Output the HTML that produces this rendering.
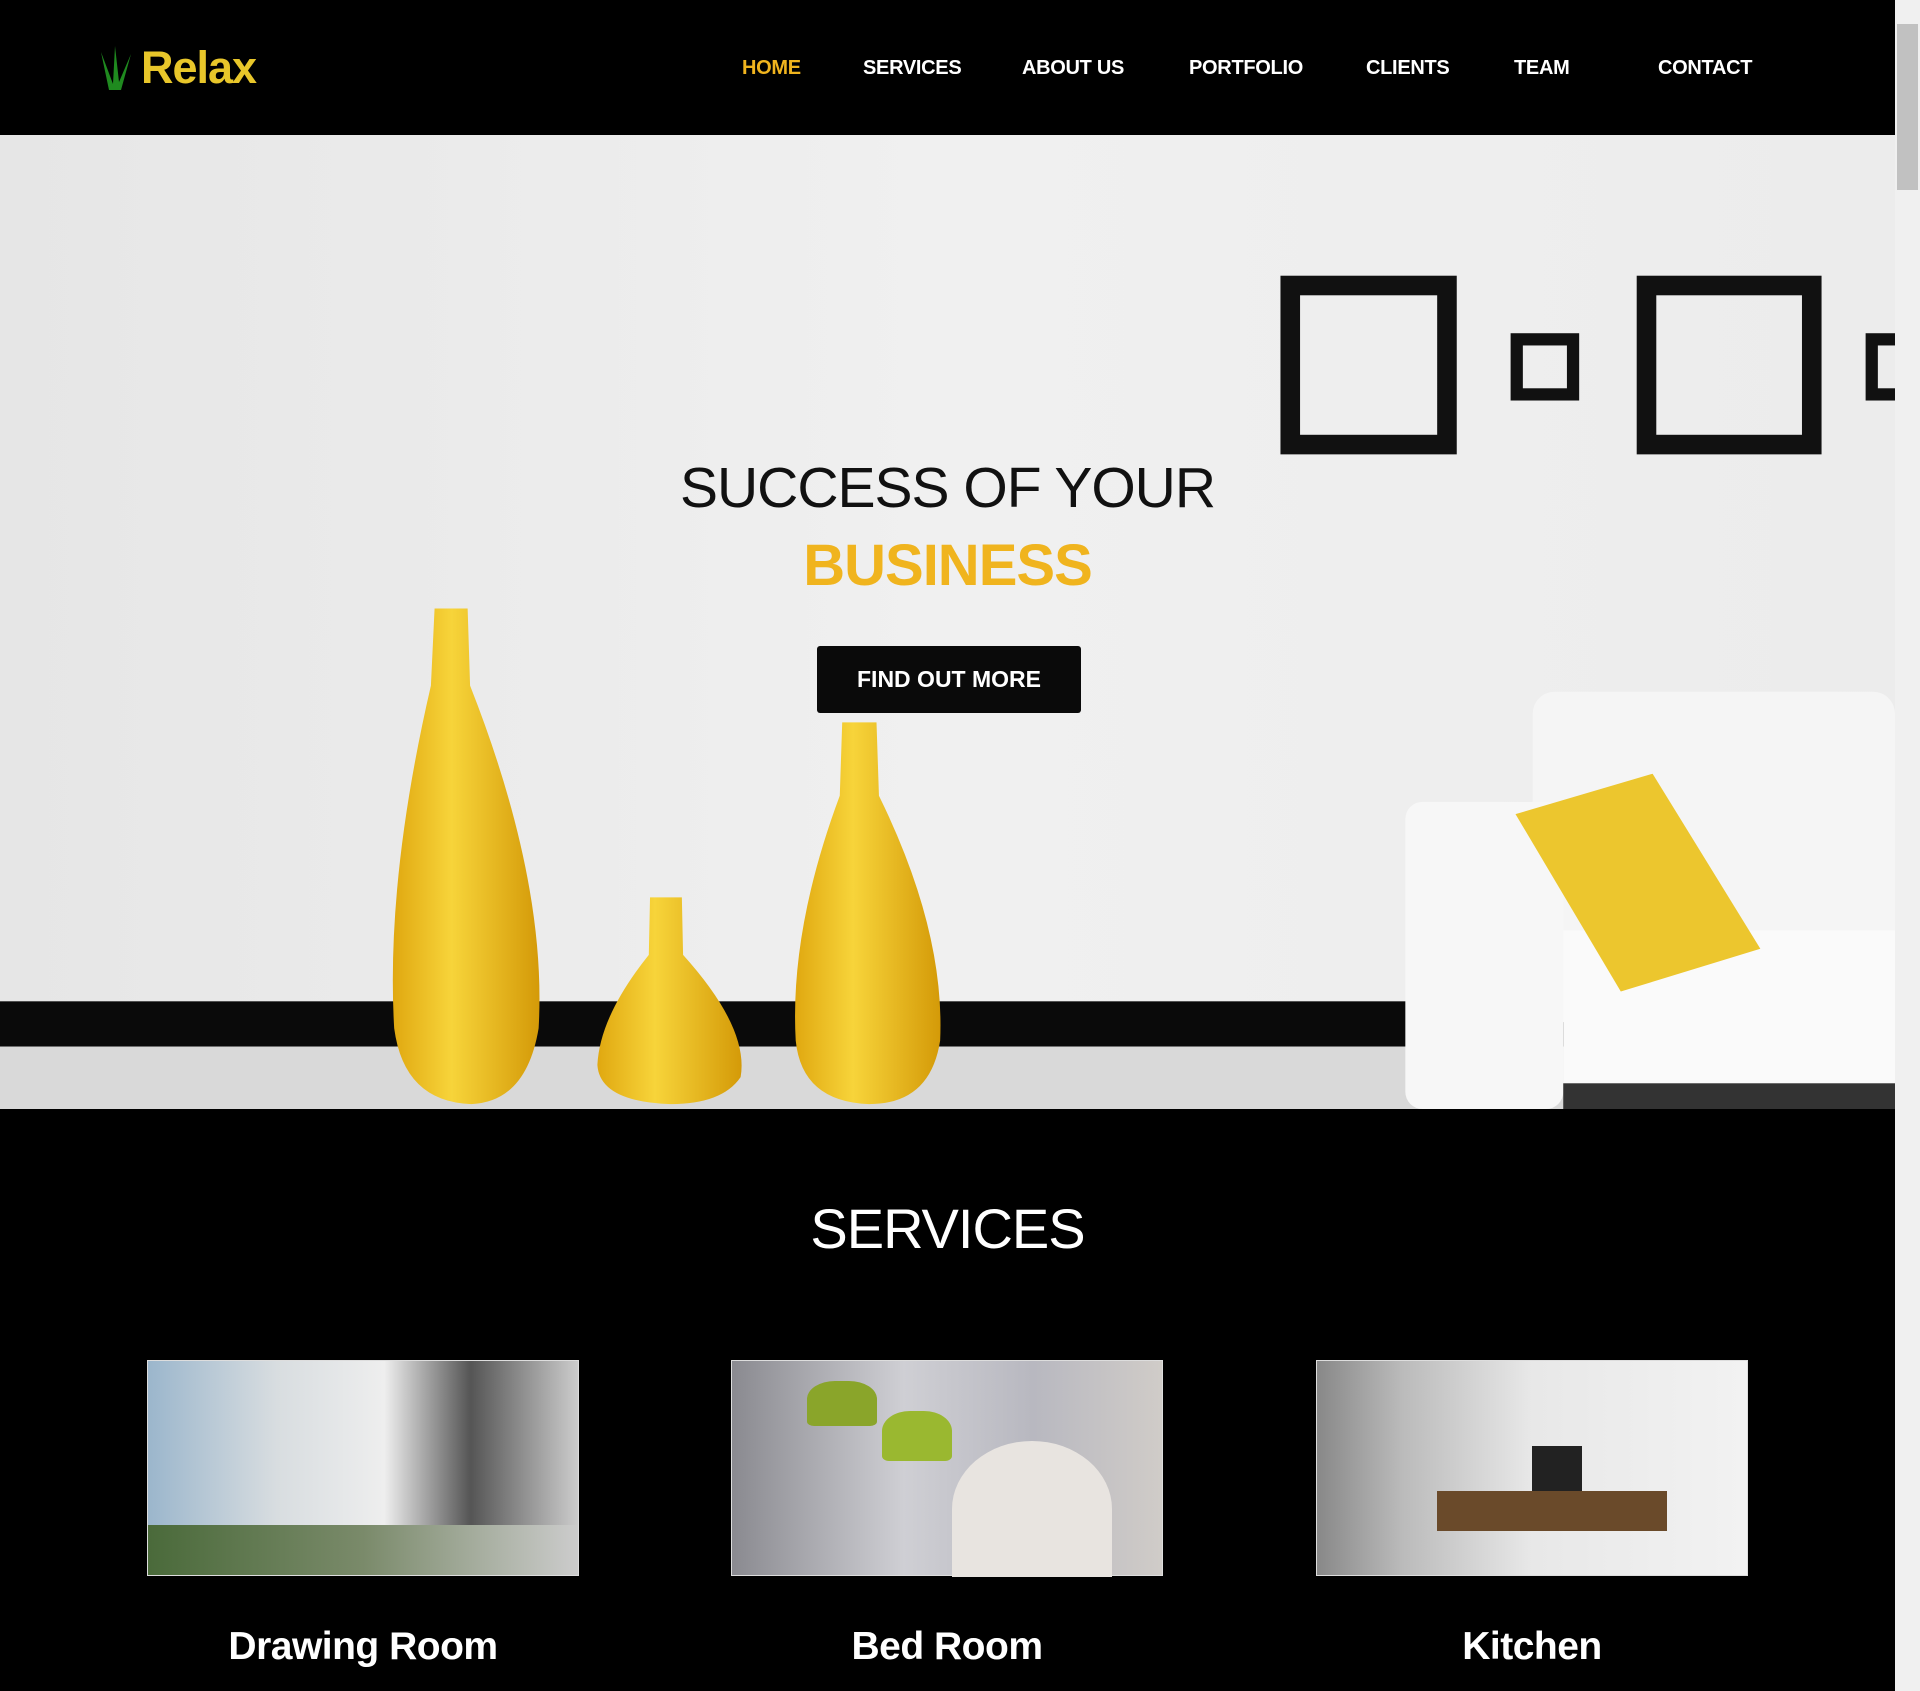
<!DOCTYPE html>
<html><head><meta charset="utf-8"><style>
*{margin:0;padding:0;box-sizing:border-box}
body{width:1920px;height:1691px;background:#000;overflow:hidden;font-family:"Liberation Sans",sans-serif;position:relative}
.nav{position:absolute;left:0;top:0;width:1895px;height:135px;background:#000}
.logo{position:absolute;left:141px;top:42px;color:#e8c62a;font-size:45px;font-weight:bold;letter-spacing:-1px}
.nav a{position:absolute;top:57px;color:#fff;font-size:20px;font-weight:bold;text-decoration:none;letter-spacing:-0.3px}
.hero{position:absolute;left:0;top:135px;width:1895px;height:974px}
.h1{position:absolute;left:0;width:1895px;text-align:center;top:320px;font-size:57px;color:#111;font-weight:normal;letter-spacing:-1px}
.h2{position:absolute;left:0;width:1895px;text-align:center;top:397px;font-size:58px;color:#f0b41e;font-weight:bold;letter-spacing:-1px}
.btn{position:absolute;left:817px;top:511px;width:264px;height:67px;background:#0a0a0a;border-radius:3px;color:#fff;font-size:23px;font-weight:bold;text-align:center;line-height:67px}
.sb{position:absolute;left:1895px;top:0;width:25px;height:1691px;background:#f0f0f0}
.thumb{position:absolute;left:1897px;top:24px;width:21px;height:166px;background:#c1c1c1}
.st{position:absolute;top:1196px;width:1895px;text-align:center;color:#fff;font-size:56px;letter-spacing:-1px}
.img{position:absolute;top:1360px;width:432px;height:216px;border:1px solid #ddd}
.cap{position:absolute;top:1625px;width:432px;text-align:center;color:#fff;font-size:39px;font-weight:bold;letter-spacing:-0.5px}
</style></head><body>
<div class="nav">
<svg style="position:absolute;left:95px;top:44px" width="40" height="46" viewBox="0 0 40 46"><path d="M14 46 L6 8 L18 40 L20 2 L24 38 L36 10 L26 46Z" fill="#1f8a1f"/></svg>
<div class="logo">Relax</div>
<a style="left:742px;color:#f0b41e">HOME</a>
<a style="left:863px">SERVICES</a>
<a style="left:1022px">ABOUT US</a>
<a style="left:1189px">PORTFOLIO</a>
<a style="left:1366px">CLIENTS</a>
<a style="left:1514px">TEAM</a>
<a style="left:1658px">CONTACT</a>
</div>
<div class="hero">
<svg width="1895" height="974" viewBox="0 110 1548 796" preserveAspectRatio="none">
<defs><linearGradient id="bg" x1="0" y1="0" x2="1" y2="0"><stop offset="0" stop-color="#e6e6e6"/><stop offset=".5" stop-color="#f0f0f0"/><stop offset="1" stop-color="#ececec"/></linearGradient>
<linearGradient id="y" x1="0" y1="0" x2="1" y2="0"><stop offset="0" stop-color="#e0a810"/><stop offset=".4" stop-color="#f7d43a"/><stop offset="1" stop-color="#d49a08"/></linearGradient></defs>
<rect x="0" y="110" width="1548" height="796" fill="url(#bg)"/>
<rect x="0" y="818" width="1548" height="37" fill="#0a0a0a"/>
<rect x="0" y="855" width="1548" height="51" fill="#d9d9d9"/>
<g fill="none" stroke="#111"><rect x="1054" y="233" width="128" height="130" stroke-width="16"/><rect x="1239" y="277" width="46" height="45" stroke-width="10"/><rect x="1345" y="233" width="135" height="130" stroke-width="16"/><rect x="1529" y="277" width="30" height="45" stroke-width="10"/></g>
<path d="M355 497 L382 497 L384 560 Q447 720 440 840 Q430 900 385 902 Q330 900 322 840 Q315 720 352 560Z" fill="url(#y)"/>
<path d="M531 733 L557 733 L558 780 Q612 840 605 880 Q590 902 548 902 Q490 900 488 870 Q490 830 530 780Z" fill="url(#y)"/>
<path d="M688 590 L716 590 L718 650 Q772 760 768 850 Q760 902 710 902 Q655 900 650 850 Q645 760 686 650Z" fill="url(#y)"/>
<rect x="1252" y="565" width="296" height="270" rx="18" fill="#f5f5f5"/>
<rect x="1277" y="760" width="271" height="125" fill="#fafafa"/>
<rect x="1148" y="655" width="129" height="251" rx="14" fill="#f7f7f7"/>
<rect x="1277" y="885" width="271" height="21" fill="#333"/>
<polygon points="1238,665 1350,632 1438,775 1324,810" fill="#ecc62e"/>
</svg>
<div class="h1">SUCCESS OF YOUR</div>
<div class="h2">BUSINESS</div>
<div class="btn">FIND OUT MORE</div>
</div>
<div class="st">SERVICES</div>
<div class="img" style="left:147px;background:linear-gradient(90deg,#9bb6cc 0%,#d8dde0 30%,#eee 55%,#555 75%,#ccc 100%)"><div style="position:absolute;left:0;bottom:0;width:100%;height:50px;background:linear-gradient(90deg,#4a6a3a,#7a8a6a,#ccc)"></div></div>
<div class="img" style="left:731px;background:linear-gradient(90deg,#8a8a90 0%,#cfcfd4 40%,#b8b8c0 70%,#d0ccc8 100%)"><div style="position:absolute;left:75px;top:20px;width:70px;height:45px;border-radius:40% 40% 10% 10%;background:#8aa52a"></div><div style="position:absolute;left:150px;top:50px;width:70px;height:50px;border-radius:40% 40% 10% 10%;background:#9ab830"></div><div style="position:absolute;left:220px;top:80px;width:160px;height:136px;border-radius:50% 50% 0 0;background:#e8e4e0"></div></div>
<div class="img" style="left:1316px;background:linear-gradient(90deg,#888 0%,#bbb 20%,#e8e8e8 50%,#f2f2f2 100%)"><div style="position:absolute;left:120px;top:130px;width:230px;height:40px;background:#6a4a2a"></div><div style="position:absolute;left:215px;top:85px;width:50px;height:45px;background:#222"></div></div>
<div class="cap" style="left:147px">Drawing Room</div>
<div class="cap" style="left:731px">Bed Room</div>
<div class="cap" style="left:1316px">Kitchen</div>
<div class="sb"></div><div class="thumb"></div>
</body></html>
